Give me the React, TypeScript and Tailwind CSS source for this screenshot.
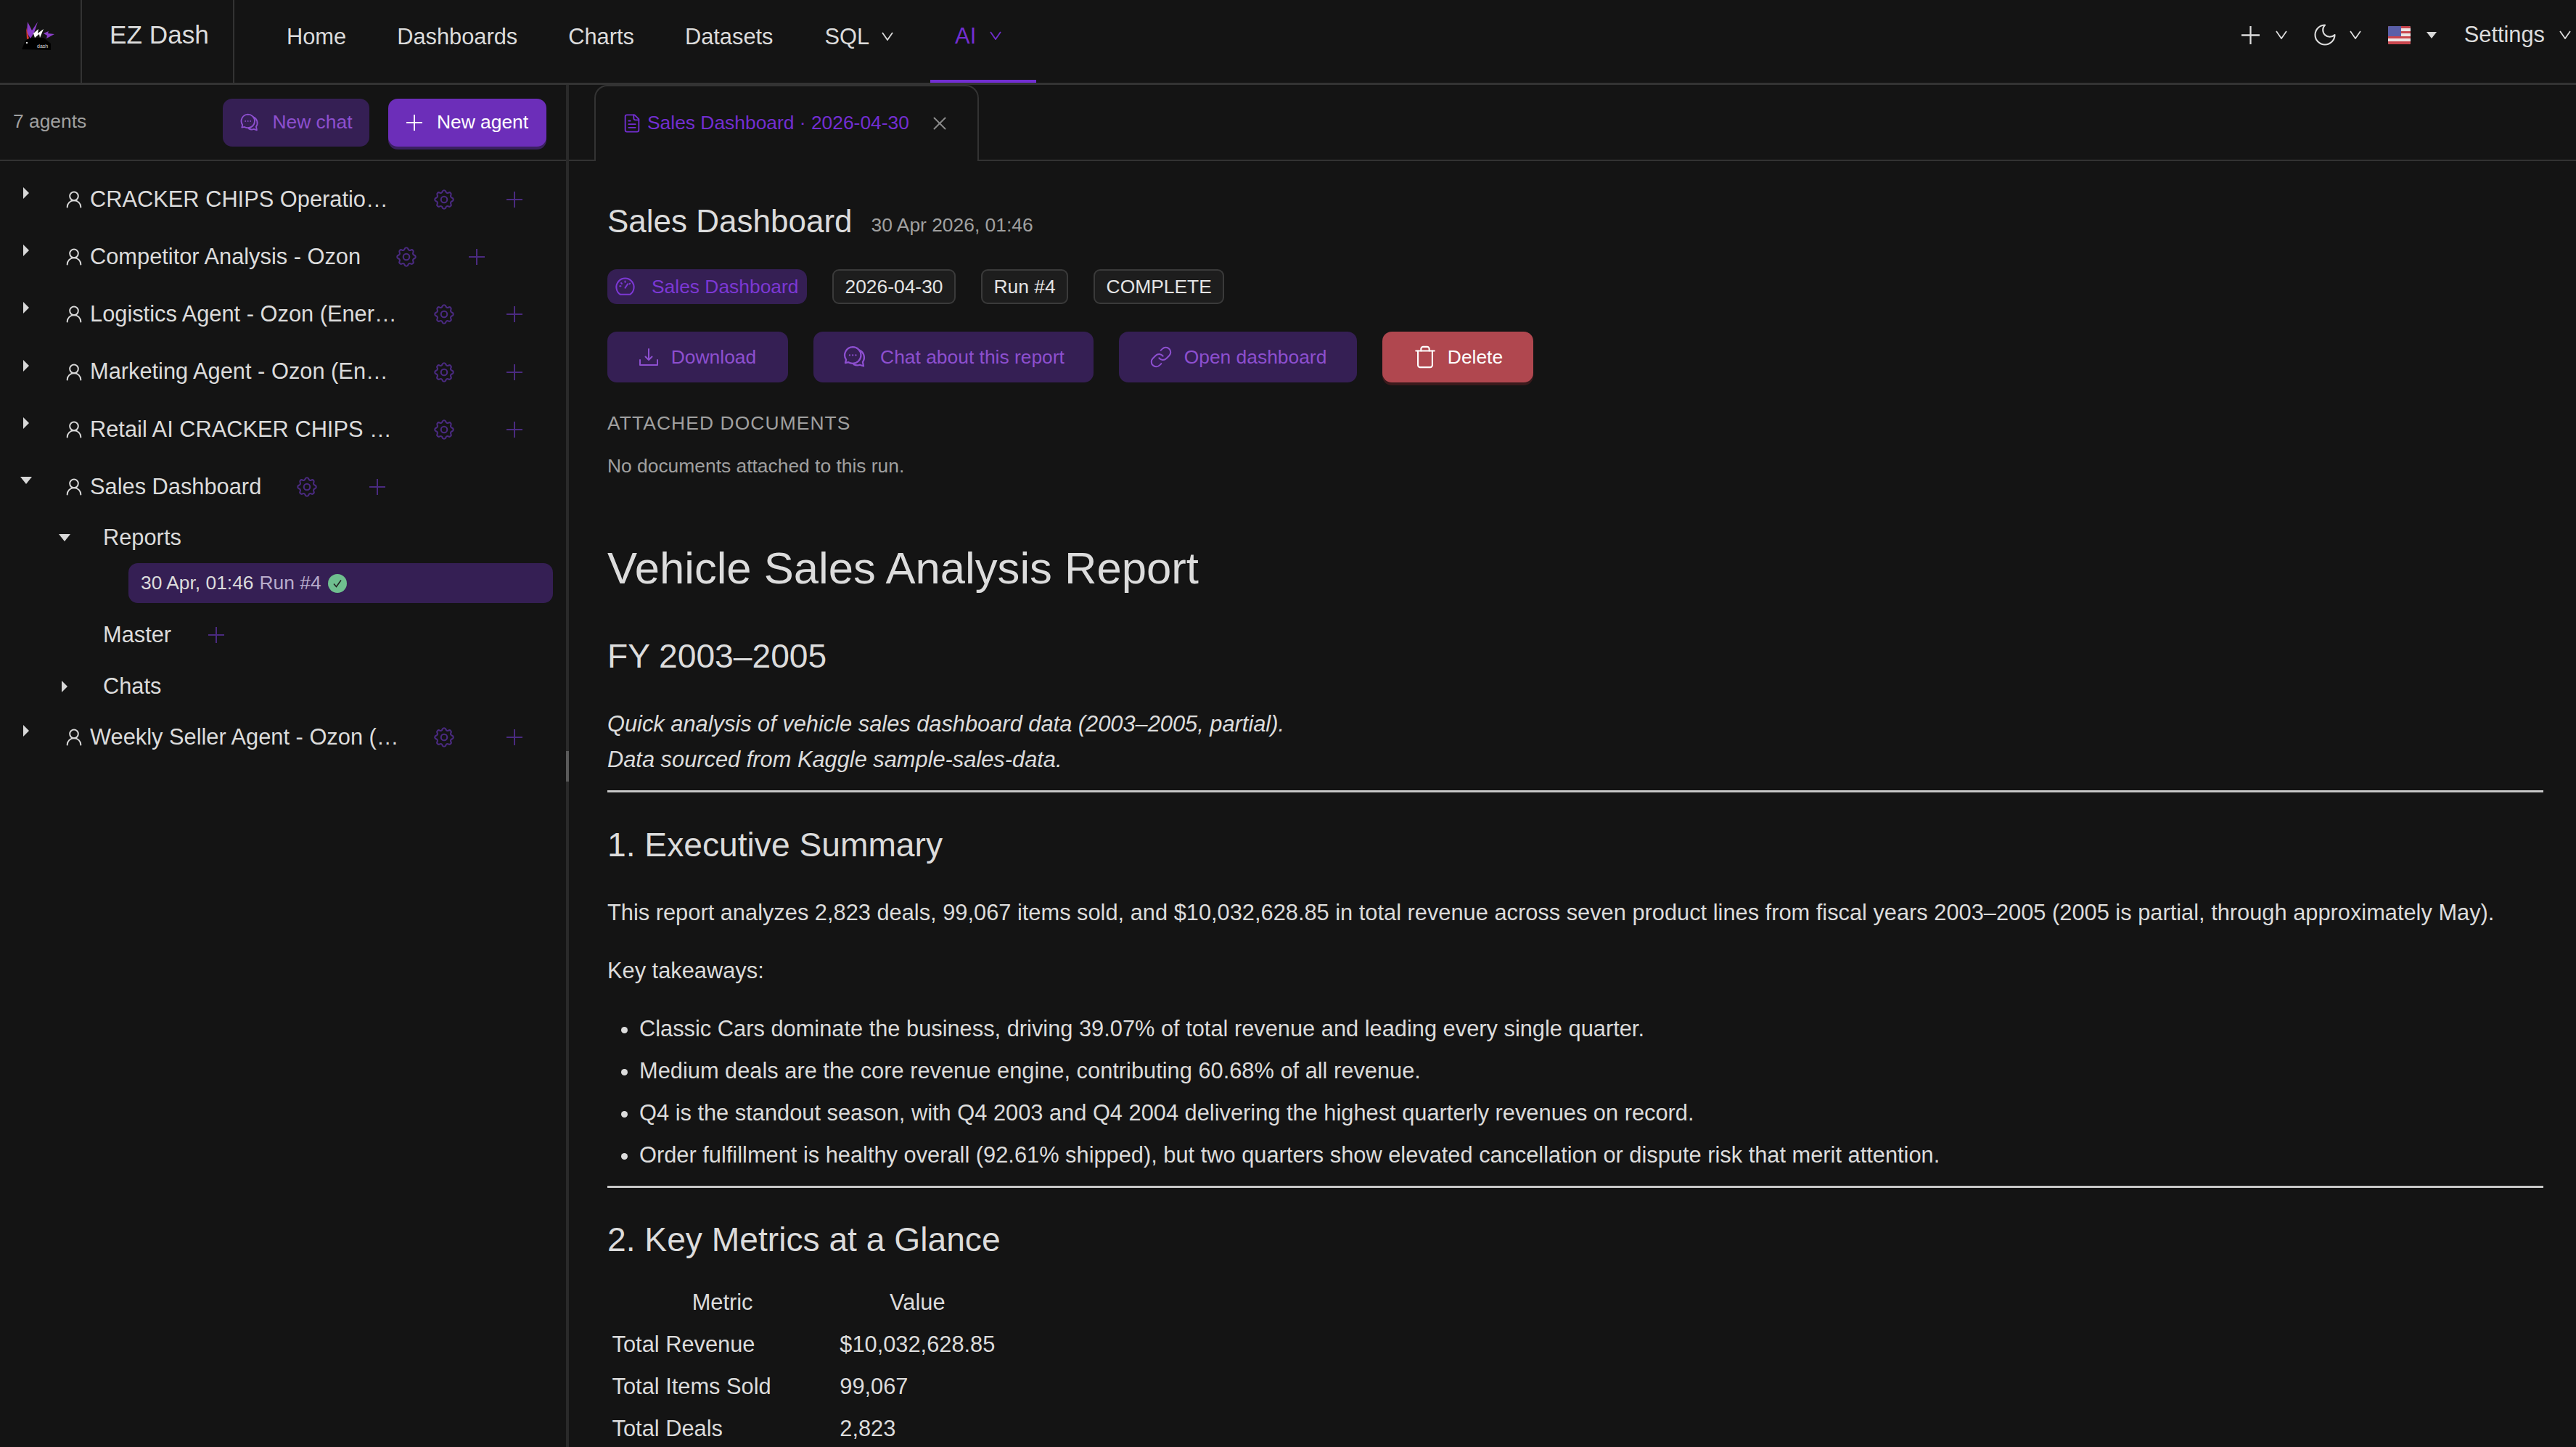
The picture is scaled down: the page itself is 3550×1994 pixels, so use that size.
import { LuUserRound, LuFileText, LuLink, LuTrash, LuMoon, LuX } from "react-icons/lu";
import { TbSettings } from "react-icons/tb";

const dimPurple = "#4a2a80";

const Chevron = ({ className = "" }: { className?: string }) => (
  <svg viewBox="0 0 16 12" className={`w-[16px] h-[12px] ${className}`} fill="none" stroke="currentColor" strokeWidth="1.8">
    <polyline points="1,1 8,11 15,1" />
  </svg>
);

const Plus = ({ size = 22, color = dimPurple, width = 2 }: { size?: number; color?: string; width?: number }) => (
  <svg viewBox="0 0 22 22" width={size} height={size} fill="none" stroke={color} strokeWidth={width}>
    <path d="M11 0v22M0 11h22" />
  </svg>
);

const CaretRight = () => (
  <svg viewBox="0 0 16 16" className="w-[16px] h-[16px]" fill="#d8d8d8">
    <polygon points="4,0 12,8 4,16" />
  </svg>
);

const CaretDown = () => (
  <svg viewBox="0 0 16 10" className="w-[16px] h-[10px]" fill="#d8d8d8">
    <polygon points="0,0 16,0 8,10" />
  </svg>
);

const ChatIcon = ({ size = 28 }: { size?: number }) => (
  <svg viewBox="0 0 24 24" width={size} height={size} fill="none" stroke="currentColor" strokeWidth="1.6" strokeLinecap="round" strokeLinejoin="round">
    <path d="M10 2.2a8 8 0 0 1 0 16c-1.5 0-3-.4-4.2-1.1l-3 .6.8-3A8 8 0 0 1 10 2.2z" />
    <path d="M16.5 5.4a7.6 7.6 0 0 1 3.2 11.4l.8 4-3.6-1.2c-2 .8-4 .6-5.800-.4" />
    <path d="M7 10.200h.01M10 10.200h.01M13 10.200h.01" />
  </svg>
);

const DownloadIcon = () => (
  <svg viewBox="0 0 26 24" width={26} height={24} fill="none" stroke="currentColor" strokeWidth="2" strokeLinecap="round" strokeLinejoin="round">
    <path d="M1 16v7h24v-7" />
    <path d="M13 1v15M8.500 11.500L13 16l4.500-4.500" />
  </svg>
);

const GaugeIcon = () => (
  <svg viewBox="0 0 24 24" width={29} height={29} fill="none" stroke="currentColor" strokeWidth="1.7" strokeLinecap="round" strokeLinejoin="round">
    <path d="M6.500 20.500a10 10 0 1 1 11 0z" />
    <path d="M12 13l3-4.500M12 5.500v1M6 11h1M17.500 8l-.5.5M7.500 7.500l.7.7" />
  </svg>
);

const Logo = () => (
  <svg viewBox="0 0 70 60" width={70} height={60}>
    <polygon points="10,48 15,36 22,32 40,32 50,40 50,49" fill="#000000" />
    <polygon points="18,10 24,22 32,10 27,25 22,33 17,25" fill="#8b3fc9" />
    <polygon points="16,18 20,33 17,34" fill="#d8352a" />
    <polygon points="26,26 33,20 32,26 40,20 35,32 34,27 28,32" fill="#ffffff" />
    <polygon points="40,26 47,23 46,26 55,27 44,33 45,29" fill="#8b3fc9" />
    <rect x="16" y="38" width="2" height="2" fill="#dddddd" />
    <text x="31" y="46" fontSize="7" fill="#dddddd" fontFamily="'Liberation Sans', sans-serif">dash</text>
  </svg>
);

const Flag = () => (
  <svg viewBox="0 0 31 25" width={31} height={25} className="rounded-[2px]">
    <rect width="31" height="25" fill="#ece4e4" />
    <rect y="0" width="31" height="3" fill="#c9454d" />
    <rect y="7" width="31" height="3" fill="#c9454d" />
    <rect y="14" width="31" height="3" fill="#c9454d" />
    <rect y="21" width="31" height="4" fill="#c9454d" />
    <rect width="18" height="14" fill="#5a5fa8" />
  </svg>
);

const NavItem = ({ label }: { label: string }) => (
  <div className="px-[35px] pb-[11px] h-full flex items-center text-[30.8px]">{label}</div>
);

// names that run up to the 425px column come with their ellipsis already in the text
const TreeRow = ({ name, open, full }: { name: string; open?: boolean; full?: boolean }) => (
  <div className="h-[79.3px] pl-[28px] flex items-center">
    <div className="w-[16px] -mt-[18px] flex justify-center">{open ? <CaretDown /> : <CaretRight />}</div>
    <LuUserRound size={28} strokeWidth={1.7} className="ml-[44px] shrink-0 text-[#d8d8d8]" />
    <span className={`ml-[8px] whitespace-nowrap text-[30.8px] ${full ? "w-[425px]" : ""}`}>{name}</span>
    <TbSettings size={34} strokeWidth={1.5} className="ml-[46px] shrink-0 text-[#4a2a80]" />
    <div className="ml-[69px]">
      <Plus />
    </div>
  </div>
);

const TagBox = ({ label }: { label: string }) => (
  <div className="h-[48px] px-[15.5px] pt-[2px] flex items-center rounded-[9px] border-2 border-[#3a3a3a] bg-[#1d1d1d] text-[26.4px] text-[#e4e4e4]">
    {label}
  </div>
);

const ActionBtn = ({ icon, label, className, gap }: { icon: React.ReactNode; label: string; className: string; gap: string }) => (
  <button className={`h-[70px] flex items-center justify-center rounded-[13px] bg-[#351f54] text-[#8d4fd0] text-[26.4px] ${gap} ${className}`}>
    {icon}
    <span className="pt-[2px]">{label}</span>
  </button>
);

const App = () => {
  return (
    <div className="h-screen overflow-hidden flex flex-col bg-[#141414] text-[#dcdcdc] font-['Liberation_Sans',Arial,sans-serif]">
      <header className="h-[117px] shrink-0 flex border-b-[3px] border-[#333333]">
        <div className="w-[113px] shrink-0 border-r-2 border-[#333333] pl-[20px] pt-[20px]">
          <Logo />
        </div>
        <div className="w-[210px] shrink-0 border-r-2 border-[#333333] pl-[38px] pb-[18px] flex items-center text-[35.200px]">
          EZ Dash
        </div>
        <nav className="ml-[37px] h-full flex">
          <NavItem label="Home" />
          <NavItem label="Dashboards" />
          <NavItem label="Charts" />
          <NavItem label="Datasets" />
          <div className="pl-[36px] pr-[51px] pb-[11px] flex items-center text-[30.8px]">
            SQL
            <Chevron className="ml-[17px] mb-[4px]" />
          </div>
          <div className="pl-[34px] pr-[48px] pb-[10px] flex items-center text-[30.8px] text-[#722ed1] border-b-4 border-[#722ed1]">
            AI
            <Chevron className="ml-[19px] mb-[2px]" />
          </div>
        </nav>
        <div className="ml-auto pr-[7px] pb-[18px] flex items-center">
          <Plus size={25} color="#dcdcdc" width={2} />
          <Chevron className="ml-[22px]" />
          <LuMoon size={36} strokeWidth={1.4} className="ml-[34px]" />
          <Chevron className="ml-[16px]" />
          <div className="ml-[37px]">
            <Flag />
          </div>
          <svg viewBox="0 0 14 9" className="ml-[22px] w-[14px] h-[9px]" fill="#d8d8d8">
            <polygon points="0,0 14,0 7,9" />
          </svg>
          <span className="ml-[38px] text-[30.8px]">Settings</span>
          <Chevron className="ml-[20px]" />
        </div>
      </header>

      <div className="flex-1 flex min-h-0">
        <aside className="relative w-[784px] shrink-0 border-r-4 border-[#2a2a2a]">
          <div className="absolute -right-[4px] top-[918px] w-[4px] h-[42px] bg-[#5a5a5a]" />
          <div className="h-[105px] border-b-2 border-[#333333] pl-[18px] pr-[27px] flex items-center justify-between">
            <span className="text-[26.4px] text-[#a0a0a0] pb-[1px]">7 agents</span>
            <div className="flex gap-[26px]">
              <button className="w-[202px] h-[66px] flex items-center justify-center gap-[17px] rounded-[13px] bg-[#351f54] text-[#8d4fd0] text-[26.4px]">
                <ChatIcon />
                New chat
              </button>
              <button className="w-[218px] h-[66px] flex items-center justify-center gap-[20px] rounded-[13px] bg-[#6c2eb9] text-white text-[26.4px] shadow-[0_4px_0_#3a2060]">
                <Plus color="#ffffff" />
                New agent
              </button>
            </div>
          </div>
          <div className="pt-[13px]">
            <TreeRow full name="CRACKER CHIPS Operatio…" />
            <TreeRow name="Competitor Analysis - Ozon" />
            <TreeRow full name="Logistics Agent - Ozon (Ener…" />
            <TreeRow full name="Marketing Agent - Ozon (En…" />
            <TreeRow full name="Retail AI CRACKER CHIPS …" />
            <TreeRow name="Sales Dashboard" open />
            <div className="h-[61px] pl-[81px] flex items-center">
              <div className="w-[16px] flex justify-center">
                <CaretDown />
              </div>
              <span className="ml-[45px] text-[30.8px]">Reports</span>
            </div>
            <div className="mt-[4.5px] ml-[177px] w-[585px] h-[55px] pl-[17px] flex items-center rounded-[13px] bg-[#351f54] text-[26.4px]">
              30 Apr, 01:46
              <span className="ml-[8px] text-[#b9accb]">Run #4</span>
              <svg viewBox="0 0 26 26" className="ml-[9px] w-[26px] h-[26px]">
                <circle cx="13" cy="13" r="13" fill="#6fbf8f" />
                <path d="M8 13.500l3.500 4 6.500-9" fill="none" stroke="#222222" strokeWidth="1.6" />
              </svg>
            </div>
            <div className="mt-[13.5px] h-[61px] pl-[142px] flex items-center text-[30.8px]">
              Master
              <div className="ml-[51px]">
                <Plus />
              </div>
            </div>
            <div className="mt-[10px] h-[61px] pl-[81px] flex items-center">
              <div className="w-[16px] flex justify-center">
                <CaretRight />
              </div>
              <span className="ml-[45px] text-[30.8px]">Chats</span>
            </div>
            <TreeRow full name="Weekly Seller Agent - Ozon (…" />
          </div>
        </aside>

        <main className="flex-1 min-w-0">
          <div className="h-[105px] border-b-2 border-[#333333] pl-[35px]">
            <div className="w-[530px] h-[105px] pl-[38px] pb-[2px] flex items-center rounded-t-[18px] border-2 border-b-0 border-[#333333] bg-[#141414]">
              <LuFileText size={28} strokeWidth={1.6} className="-ml-[2px] text-[#722ed1]" />
              <span className="ml-[7px] text-[26.4px] text-[#722ed1]">Sales Dashboard · 2026-04-30</span>
              <LuX size={30} strokeWidth={1.6} className="ml-[27px] text-[#8a8a8a]" />
            </div>
          </div>

          <div className="pl-[53px] pr-[45px]">
            <div className="mt-[53px] h-[60px] flex items-center">
              <h1 className="text-[44px]">Sales Dashboard</h1>
              <span className="ml-[26px] mt-[12px] text-[26.4px] text-[#a0a0a0]">30 Apr 2026, 01:46</span>
            </div>

            <div className="mt-[36px] flex items-center">
              <div className="h-[48px] w-[275px] pl-[10px] flex items-center rounded-[13px] bg-[#351f54] text-[26.4px] text-[#7c38d4]">
                <GaugeIcon />
                <span className="ml-[22px] pt-[2px]">Sales Dashboard</span>
              </div>
              <div className="ml-[35px]">
                <TagBox label="2026-04-30" />
              </div>
              <div className="ml-[35px]">
                <TagBox label="Run #4" />
              </div>
              <div className="ml-[35px]">
                <TagBox label="COMPLETE" />
              </div>
            </div>

            <div className="mt-[38px] flex gap-[35px]">
              <ActionBtn className="w-[249px]" gap="gap-[18px]" icon={<DownloadIcon />} label="Download" />
              <ActionBtn className="w-[386px]" gap="gap-[18px]" icon={<ChatIcon size={34} />} label="Chat about this report" />
              <ActionBtn className="w-[328px]" gap="gap-[16px]" icon={<LuLink size={32} strokeWidth={1.5} />} label="Open dashboard" />
              <button className="w-[208px] h-[70px] flex items-center justify-center gap-[14px] rounded-[13px] bg-[#b0474f] text-white text-[26.4px] shadow-[0_4px_0_#3a1a1c]">
                <LuTrash size={34} strokeWidth={1.5} />
                <span className="pt-[2px]">Delete</span>
              </button>
            </div>

            <div className="mt-[39px] h-[36px] flex items-center text-[26.4px] tracking-[1.1px] text-[#a0a0a0]">ATTACHED DOCUMENTS</div>
            <div className="mt-[23px] h-[36px] flex items-center text-[26.4px] text-[#a0a0a0]">No documents attached to this run.</div>

            <h1 className="mt-[87px] h-[70px] flex items-center text-[61.6px]">Vehicle Sales Analysis Report</h1>
            <h2 className="mt-[60px] h-[54px] flex items-center text-[46.2px]">FY 2003–2005</h2>

            <p className="mt-[41px] text-[30.8px] leading-[49.3px] italic">
              Quick analysis of vehicle sales dashboard data (2003–2005, partial).
              <br />
              Data sourced from Kaggle sample-sales-data.
            </p>
            <hr className="mt-[17px] h-[3px] border-0 bg-[#c8c8c8]" />

            <h3 className="mt-[46px] h-[54px] flex items-center text-[46.2px]">1. Executive Summary</h3>
            <p className="mt-[41px] text-[30.8px] leading-[49.3px] whitespace-nowrap">
              This report analyzes 2,823 deals, 99,067 items sold, and $10,032,628.85 in total revenue across seven product lines from fiscal years 2003–2005 (2005 is partial, through approximately May).
            </p>
            <p className="mt-[30.8px] text-[30.8px] leading-[49.3px]">Key takeaways:</p>
            <ul className="mt-[30.8px] pl-[44px] list-disc flex flex-col gap-[8.8px] text-[30.8px] leading-[49.3px]">
              <li>Classic Cars dominate the business, driving 39.07% of total revenue and leading every single quarter.</li>
              <li>Medium deals are the core revenue engine, contributing 60.68% of all revenue.</li>
              <li>Q4 is the standout season, with Q4 2003 and Q4 2004 delivering the highest quarterly revenues on record.</li>
              <li>Order fulfillment is healthy overall (92.61% shipped), but two quarters show elevated cancellation or dispute risk that merit attention.</li>
            </ul>
            <hr className="mt-[18px] h-[3px] border-0 bg-[#c8c8c8]" />

            <h3 className="mt-[44px] h-[54px] flex items-center text-[46.2px]">2. Key Metrics at a Glance</h3>
            <table className="mt-[30px] text-[30.8px] leading-[49.3px]">
              <thead>
                <tr>
                  <th className="font-normal text-center pl-[10px] pr-[6.600px] py-[4.400px]">Metric</th>
                  <th className="font-normal text-center px-[6.600px] py-[4.400px]">Value</th>
                </tr>
              </thead>
              <tbody>
                {[
                  ["Total Revenue", "$10,032,628.85"],
                  ["Total Items Sold", "99,067"],
                  ["Total Deals", "2,823"],
                ].map(([metric, value]) => (
                  <tr key={metric}>
                    <td className="pl-[6.600px] pr-[88px] py-[4.400px]">{metric}</td>
                    <td className="px-[6.600px] py-[4.400px]">{value}</td>
                  </tr>
                ))}
              </tbody>
            </table>
          </div>
        </main>
      </div>
    </div>
  );
};

export default App;
